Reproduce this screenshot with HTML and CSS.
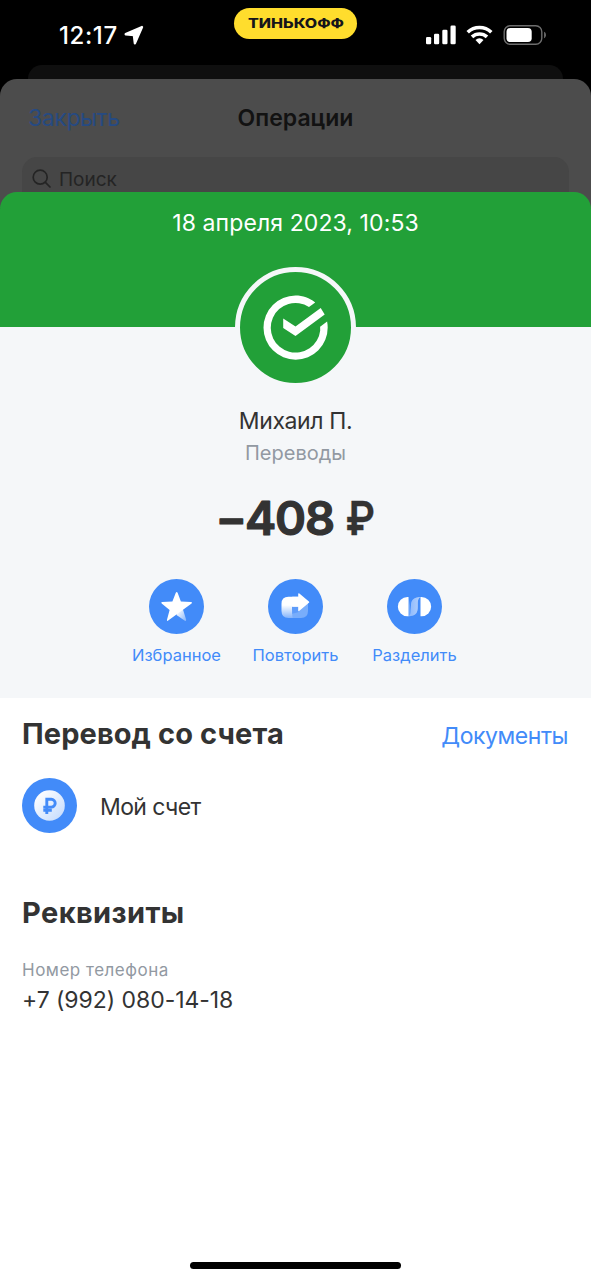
FILE: index.html
```html
<!DOCTYPE html>
<html lang="ru">
<head>
<meta charset="utf-8">
<title>Операция</title>
<link rel="stylesheet" href="styles.css">
</head>
<body>
<div class="screen">
  <header class="status">
    <div class="status-left">
      <span class="clock">12:17</span>
      <svg class="location" width="20" height="20" viewBox="0 0 20 20"><path d="M18 2 1.700 9.200 9.900 10.100 10.900 18.300Z" fill="#fff" stroke="#fff" stroke-width="2.400" stroke-linejoin="round"/></svg>
    </div>
    <div class="brand">
      <svg width="123" height="31" viewBox="0 0 123 31"><text class="brand-text" x="14" y="19.500" textLength="96" lengthAdjust="spacingAndGlyphs">ТИНЬКОФФ</text></svg>
    </div>
    <div class="status-right">
      <svg width="122" height="22" viewBox="0 0 122 22">
        <g fill="#fff">
          <rect x="1" y="13" width="5.200" height="7.300" rx="1.300"/>
          <rect x="9" y="9.700" width="5.200" height="10.600" rx="1.300"/>
          <rect x="17.300" y="5.700" width="5.200" height="14.600" rx="1.300"/>
          <rect x="25.500" y="1.500" width="5.200" height="18.800" rx="1.300"/>
        </g>
        <g fill="none" stroke="#fff" stroke-width="3.600">
          <path d="M42.700 8.200a17.200 17.200 0 0 1 23.600 0"/>
          <path d="M47 12.900a11 11 0 0 1 15 0"/>
        </g>
        <path d="M50.500 15.900a6 6 0 0 1 8 0L54.500 20.200z" fill="#fff"/>
        <rect x="79.200" y="1.700" width="37.600" height="18.600" rx="6" fill="none" stroke="#6d6d6d" stroke-width="1.400"/>
        <rect x="81.500" y="4" width="25.200" height="14" rx="3.800" fill="#fff"/>
        <path d="M119.200 7.800c2.200 1 2.200 5.400 0 6.400z" fill="#777"/>
      </svg>
    </div>
  </header>
  <div class="back-card"></div>
  <section class="operations">
    <nav class="nav">
      <span class="nav-close">Закрыть</span>
      <span class="nav-title">Операции</span>
      <span></span>
    </nav>
    <div class="search">
      <svg width="20" height="20" viewBox="0 0 20 20" fill="none" stroke="#242424" stroke-width="1.700" stroke-linecap="round"><circle cx="8.200" cy="8.200" r="7"/><path d="M13.400 13.400 18 18"/></svg>
      <span class="search-text">Поиск</span>
    </div>
  </section>
  <main class="sheet">
    <div class="banner"><span class="date">18 апреля 2023, 10:53</span></div>
    <section class="summary">
      <div class="logo">
        <svg width="111" height="111" viewBox="0 0 111 111">
          <path d="M55.500 23.500c7.400 0 14 2.400 19.700 6.900l-6.200 4.500a24.800 24.800 0 1 0 11.200 23.500l-.1-3.700 7-5.200c.4 2 .6 3.900.6 6a32.100 32.100 0 1 1-32.200-32z" fill="#fff"/>
          <path d="M43.200 46.600 55.500 54.400 80.700 36l4 6.500-29.200 21.500-12.300-8z" fill="#fff"/>
        </svg>
      </div>
      <div class="person">Михаил П.</div>
      <div class="category">Переводы</div>
      <div class="amount"><svg width="180" height="56" viewBox="0 0 180 56"><text class="amount-text" y="45"><tspan x="9.500">−</tspan><tspan x="39" textLength="90">408</tspan> <tspan class="currency" x="139.500" textLength="29.500" lengthAdjust="spacingAndGlyphs">₽</tspan></text></svg></div>
      <div class="actions">
        <div class="action">
          <svg width="55" height="55" viewBox="0 0 55 55">
            <defs><linearGradient id="fade" x1="0" y1="0" x2="1" y2="1"><stop offset=".15" stop-color="#fff"/><stop offset="1" stop-color="#fff" stop-opacity=".35"/></linearGradient></defs>
            <circle cx="27.500" cy="27.500" r="27.500" fill="#428bf9"/>
            <path d="m28.500 31.500 5-2.500 3.600 11.500q.3 1.900-1.200 1.200L27.500 36z" fill="url(#fade)"/>
            <path d="M26.800 13.800q.9-1.700 1.800 0l3.300 8.800 10.200.4q1.600.3.500 1.500L19.200 41.600q-1.600 1-1.200-.9l2.600-9.700-7.900-6.500q-1.200-1.300.4-1.500l10.300-.4z" fill="#fff"/>
          </svg>
          <span class="action-label">Избранное</span>
        </div>
        <div class="action">
          <svg width="55" height="55" viewBox="0 0 55 55">
            <defs><linearGradient id="down" x1="0" y1="0" x2="0" y2="1"><stop offset=".4" stop-color="#fff"/><stop offset="1" stop-color="#fff" stop-opacity=".35"/></linearGradient></defs>
            <circle cx="27.500" cy="27.500" r="27.500" fill="#428bf9"/>
            <path d="M24.200 31 40 24v8q0 7-7 7h-9z" fill="#78adfb"/>
            <path d="M30.500 17.700H20.500q-7 0-7 7V32q0 7 7 7h3.700V27.800h6.300z" fill="url(#down)"/>
            <path d="M24.200 27.800h6v5.500l-6 1.500z" fill="#5e9cfa"/>
            <path d="M30.200 14.800q.3-1 1.200-.3l9.500 7.900q.9.700 0 1.400l-9.500 8q-.9.600-1.200-.4v-3.600h-6V17.700h6z" fill="#fff"/>
          </svg>
          <span class="action-label">Повторить</span>
        </div>
        <div class="action">
          <svg width="55" height="55" viewBox="0 0 55 55">
            <defs><linearGradient id="side"><stop offset="0" stop-color="#8ab7fc"/><stop offset="1" stop-color="#b4d1fd"/></linearGradient></defs>
            <circle cx="27.500" cy="27.500" r="27.500" fill="#428bf9"/>
            <path d="M21.300 18v19.300h1c6.500-.3 8.500-3.500 8.500-9.300v-4c0-3.500 1-5.400 2.900-6-7.500.3-9.700 3.500-9.700 9v4" fill="#6ba5fb"/>
            <path d="M21.300 37.300c7.500-.3 9.500-3.500 9.500-9.300v-4c0-3.500 1-5.400 2.900-6-7.500.3-9.700 3.500-9.700 9v4c0 3-.7 5-2.700 6.300z" fill="url(#side)"/>
            <path d="M21.500 18v19.300h-1a9.650 9.650 0 0 1 0-19.300z" fill="#fff"/>
            <path d="M33.500 18h1a9.650 9.650 0 0 1 0 19.300h-1z" fill="#fff"/>
          </svg>
          <span class="action-label">Разделить</span>
        </div>
      </div>
    </section>
    <section class="account">
      <div class="heading-row">
        <h2 class="heading head-transfer">Перевод со счета</h2>
        <span class="documents">Документы</span>
      </div>
      <div class="account-row">
        <svg width="55" height="55" viewBox="0 0 55 55">
          <defs><linearGradient id="coin" x1="0" y1="0" x2="1" y2="1"><stop offset=".1" stop-color="#fff"/><stop offset="1" stop-color="#c0d9fd"/></linearGradient></defs>
          <circle cx="27.500" cy="27.500" r="27.500" fill="#428bf9"/>
          <circle cx="27.500" cy="27.500" r="15.300" fill="url(#coin)"/>
          <path d="M24.800 36V21.300h4.500a3.900 3.900 0 0 1 0 7.800H21.300M21.300 32.300h8.500" fill="none" stroke="#428bf9" stroke-width="2.900"/>
        </svg>
        <span class="account-name">Мой счет</span>
      </div>
    </section>
    <section class="details">
      <h2 class="heading head-details">Реквизиты</h2>
      <div class="field-label">Номер телефона</div>
      <div class="field-value">+7 (992) 080-14-18</div>
    </section>
    <div class="home"></div>
  </main>
</div>
</body>
</html>
```
FILE: styles.css
```css
* { box-sizing: border-box; }
body { margin: 0; background: #000; }
svg { display: block; flex: none; }
.screen {
  width: 591px; height: 1280px; overflow: hidden;
  display: flex; flex-direction: column;
  font-family: Inter, "Liberation Sans", sans-serif;
  color: #333; white-space: nowrap; background: #000;
}
.status {
  height: 65px; flex: none;
  display: grid; grid-template-columns: 234px 123px 234px;
}
.status-left { display: flex; padding: 25px 0 0 59px; }
.clock { font-size: 24px; font-weight: 550; line-height: 21px; color: #fff; width: 65px; letter-spacing: .6px; }
.brand { margin-top: 8px; height: 31px; border-radius: 16px; background: #ffdd2d; }
.brand-text { font-size: 12.500px; font-weight: 800; fill: #15151a; }
.status-right { padding: 24px 0 0 68px; }
.back-card { height: 14px; flex: none; margin: 0 28px; background: #0f0f0f; border-radius: 14px 14px 0 0; }
.operations { height: 129px; flex: none; background: #4c4c4c; border-radius: 17px 17px 0 0; }
.nav { height: 78px; padding: 0 28px; display: grid; grid-template-columns: 1fr auto 1fr; line-height: 78px; font-size: 23px; }
.nav-close { color: #264a82; letter-spacing: -.4px; }
.nav-title { color: #121212; font-weight: 600; }
.search {
  height: 51px; margin: 0 22px; padding: 12px 0 0 10px;
  display: flex; gap: 7px;
  background: #464646; border-radius: 15px 15px 0 0; color: #242424;
}
.search-text { font-size: 19px; line-height: 21px; }
.sheet {
  flex: 1; margin-top: -16px; border-radius: 17px 17px 0 0; overflow: hidden;
  background: linear-gradient(#22a038 135px, #fff 135px);
  display: flex; flex-direction: column;
}
.banner { height: 135px; flex: none; text-align: center; }
.date { font-size: 23px; line-height: 63px; color: #fff; letter-spacing: .1px; }
.summary {
  height: 371px; flex: none; background: #f5f7f9;
  display: flex; flex-direction: column; align-items: center;
}
.logo {
  width: 121px; height: 121px; margin-top: -60px; flex: none;
  border: 5px solid #f5f7f9; border-radius: 50%; background: #22a038;
}
.person { font-size: 23px; line-height: 32px; margin-top: 17px; letter-spacing: -.4px; }
.category { font-size: 20px; line-height: 32px; color: #9299a2; }
.amount { margin-top: 21px; height: 56px; }
.amount-text { font-size: 47px; font-weight: 600; fill: #333; stroke: #333; stroke-width: 1.2px; stroke-linejoin: round; }
.currency { stroke-width: .3px; }
.actions { display: grid; grid-template-columns: repeat(3, 119px); margin-top: 33px; }
.action { display: flex; flex-direction: column; align-items: center; }
.action-label { margin-top: 9px; font-size: 16.500px; line-height: 25px; color: #428bf9; }
.account { height: 180px; flex: none; padding: 15px 22px 0; }
.heading-row { display: flex; justify-content: space-between; }
.heading { margin: 0; font-size: 29px; line-height: 41px; font-weight: 700; }
.head-transfer { letter-spacing: .1px; }
.head-details { letter-spacing: .4px; }
.documents { font-size: 23px; line-height: 46px; color: #428bf9; letter-spacing: -.45px; padding-right: 1px; }
.account-row { display: flex; align-items: center; gap: 23px; margin-top: 19px; }
.account-name { font-size: 23px; letter-spacing: -.6px; padding-top: 2px; }
.details { padding: 14px 22px 0; }
.field-label { margin-top: 26px; font-size: 17px; line-height: 22px; color: #9299a2; letter-spacing: .5px; }
.field-value { font-size: 23px; line-height: 39px; letter-spacing: -.05px; }
.home { width: 211px; height: 7px; margin: auto auto 11px; border-radius: 4px; background: #000; }
```
